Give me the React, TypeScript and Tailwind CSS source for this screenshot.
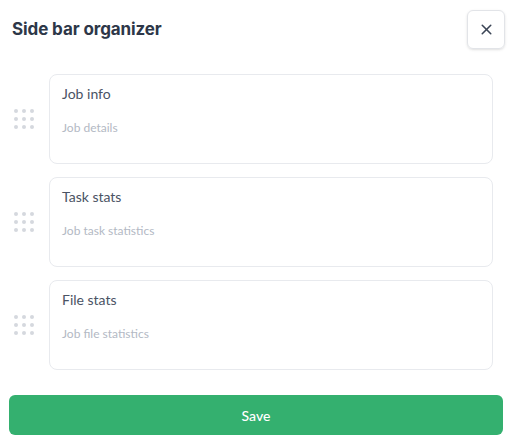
import { X } from "lucide-react";

const ITEMS = [
  { title: "Job info", desc: "Job details" },
  { title: "Task stats", desc: "Job task statistics" },
  { title: "File stats", desc: "Job file statistics" },
];

function DragHandle() {
  return (
    <div className="grid w-[20px] grid-cols-3 gap-[4px]">
      {Array.from({ length: 9 }).map((_, i) => (
        <span key={i} className="h-[4px] w-[4px] rounded-full bg-[#d5d8de]" />
      ))}
    </div>
  );
}

export default function App() {
  return (
    <div className="h-[445px] w-[514px] bg-white font-['Lato',sans-serif]">
      {/* header */}
      <div className="flex items-center justify-between pl-[12px] pr-[9px] pt-[10px]">
        <h1 className="font-['Inter',sans-serif] text-[17px] font-bold tracking-[-0.1px] text-[#2d3748]">
          Side bar organizer
        </h1>
        <button className="flex h-[39px] w-[38px] items-center justify-center rounded-md border border-[#e2e4e8] text-[#3b4556] shadow-sm">
          <X size={17} strokeWidth={2.2} />
        </button>
      </div>

      {/* items */}
      <div className="mt-[25px] flex flex-col gap-[13px] pr-[21px]">
        {ITEMS.map((item) => (
          <div key={item.title} className="flex items-center">
            <div className="flex w-[49px] justify-center pr-[2px]">
              <DragHandle />
            </div>
            <div className="h-[90px] flex-1 rounded-lg border border-[#e8eaee] px-[12px] pt-[10px]">
              <div className="text-[14px] leading-[18px] text-[#4a5364]">{item.title}</div>
              <div className="mt-[17px] text-[12px] leading-[16px] text-[#b3b9c4]">{item.desc}</div>
            </div>
          </div>
        ))}
      </div>

      {/* save */}
      <div className="mt-[25px] pl-[9px] pr-[11px]">
        <button className="h-[40px] w-full rounded-md bg-[#34b06f] text-[14px] font-medium text-white">
          Save
        </button>
      </div>
    </div>
  );
}
